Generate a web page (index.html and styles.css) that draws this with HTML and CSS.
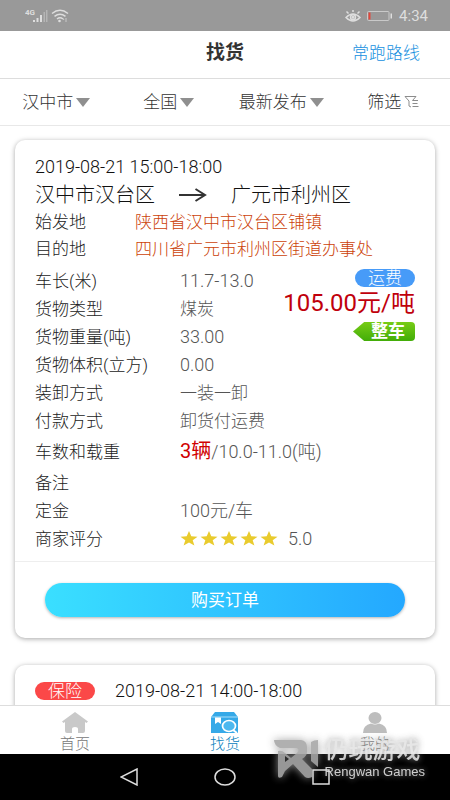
FILE: index.html
```html
<!DOCTYPE html>
<html lang="zh-CN">
<head>
<meta charset="utf-8">
<meta name="viewport" content="width=device-width, initial-scale=1">
<title>找货</title>
<link rel="stylesheet" href="styles.css">
</head>
<body>
<div class="app">
  <div class="status">
    <div class="status-group">
      <svg width="44" height="16" viewBox="0 0 44 16" fill="#dedede">
        <text x="0" y="7" class="net">4G</text>
        <path d="M8 12h2v2H8zM11.500 10h2v4h-2zM15 7h2v7h-2z"/>
        <path d="M18.500 4h1.500V14h-1.500zM21 2h1.500v12H21z" opacity=".4"/>
        <g fill="none" stroke="#dedede" stroke-width="1.500"><path d="M27 5.500q8-6.500 16 0M29.500 8.300q5.500-4.300 11 0M32 11q3-2.300 6 0"/></g>
        <circle cx="34.500" cy="13" r="1.300"/><path d="M38 10l1.500 2H38zM40.500 10h1v4h-1z" opacity=".7"/>
      </svg>
    </div>
    <div class="status-group">
      <svg width="16" height="14" viewBox="0 0 16 14" fill="none" stroke="#dedede" stroke-width="1.500"><path d="M1 8.500q7-7 14 0-7 7-14 0zM8 3V1M3.500 4.500L1.500 2.500M12.500 4.500l2-2"/><circle cx="8" cy="8.300" r="2.500"/><circle cx="8" cy="8.300" r=".8"/></svg>
      <svg width="26" height="10" viewBox="0 0 26 10"><rect x=".5" y=".5" width="21.500" height="9" rx="1" fill="none" stroke="#c9c9c9"/><path fill="#e2463a" d="M1.500 1.500h2v7h-2z"/><path fill="#dedede" d="M23.500 2.500h1.500v5h-1.500z"/></svg>
      <span class="clock">4:34</span>
    </div>
  </div>

  <header class="header">
    <h1 class="title">找货</h1>
    <a class="routes" href="#">常跑路线</a>
  </header>

  <nav class="filters">
    <button class="filter" type="button">汉中市<i class="caret"></i></button>
    <button class="filter" type="button">全国<i class="caret"></i></button>
    <button class="filter" type="button">最新发布<i class="caret"></i></button>
    <button class="filter" type="button">筛选<svg width="16" height="12" viewBox="0 0 16 12" fill="none" stroke="#8c8c8c"><path d="M12 .500H1l4 4.500v5l2 1M12 .500L8.500 4.500M8.500 4.500h5.500M8.500 7.500h5M8.500 10.500h6"/></svg></button>
  </nav>

  <main class="list">
    <article class="card">
      <div class="info">
        <div class="date">2019-08-21 15:00-18:00</div>
        <div class="route">
          <span>汉中市汉台区</span>
          <svg width="28" height="14" viewBox="0 0 28 14" fill="none" stroke="#333" stroke-width="2"><path d="M0 7h26M16.500 1L26 7l-9.500 6"/></svg>
          <span>广元市利州区</span>
        </div>
        <dl class="places">
          <div class="row place"><dt>始发地</dt><dd>陕西省汉中市汉台区铺镇</dd></div>
          <div class="row place"><dt>目的地</dt><dd>四川省广元市利州区街道办事处</dd></div>
        </dl>
        <div class="details">
          <dl class="facts">
            <div class="row"><dt>车长(米)</dt><dd class="num">11.7-13.0</dd></div>
            <div class="row"><dt>货物类型</dt><dd>煤炭</dd></div>
            <div class="row"><dt>货物重量(吨)</dt><dd class="num">33.00</dd></div>
            <div class="row"><dt>货物体积(立方)</dt><dd class="num">0.00</dd></div>
            <div class="row"><dt>装卸方式</dt><dd>一装一卸</dd></div>
            <div class="row"><dt>付款方式</dt><dd>卸货付运费</dd></div>
          </dl>
          <div class="price-box">
            <span class="pill">运费</span>
            <strong class="price">105.00元/吨</strong>
            <span class="tag">整车</span>
          </div>
        </div>
        <dl class="facts">
          <div class="row load"><dt>车数和载重</dt><dd class="num"><span class="trucks">3辆</span>/10.0-11.0(吨)</dd></div>
          <div class="row"><dt>备注</dt><dd></dd></div>
          <div class="row"><dt>定金</dt><dd class="num">100元/车</dd></div>
          <div class="row"><dt>商家评分</dt><dd class="num score">
            <svg width="98" height="16" viewBox="0 0 98 16" fill="#e9cb2d">
              <defs><path id="star" d="M9 0l2.300 5.300 6.200.4-4.800 3.500 1.700 5.300L9 11.500l-5.400 3 1.700-5.300L.500 5.700l6.200-.4z"/></defs>
              <use href="#star"/><use href="#star" x="20"/><use href="#star" x="40"/><use href="#star" x="60"/><use href="#star" x="80"/>
            </svg><span>5.0</span></dd></div>
        </dl>
      </div>
      <div class="action"><button class="buy" type="button">购买订单</button></div>
    </article>

    <article class="card">
      <div class="insured"><span class="pill red">保险</span><span class="date">2019-08-21 14:00-18:00</span></div>
    </article>
  </main>

  <nav class="tabs">
    <a class="tab" href="#"><svg width="26" height="22" viewBox="0 0 26 22" fill="#c9c9c9"><path d="M13 0l13 9.500-1.500 1.500-1.500-1v9q0 2-2 2h-5v-4q0-2-3-2t-3 2v4H5q-2 0-2-2v-9l-1.500 1L0 9.500z"/></svg>首页</a>
    <a class="tab active" href="#"><svg width="28" height="22" viewBox="0 0 28 22"><path fill="#35a9e8" d="M4 0h19l4 5v16H0V5z"/><path stroke="#a8defa" d="M0 5h27"/><path fill="#fff" d="M4 5.500h6V12l-3-2-3 2z"/><ellipse cx="18" cy="14" rx="6.500" ry="5.500" fill="#4db8ef" stroke="#fff" stroke-width="1.700"/><path stroke="#fff" stroke-width="2" d="M22 18l4 3"/></svg>找货</a>
    <a class="tab" href="#"><svg width="26" height="22" viewBox="0 0 26 22" fill="#bdbdbd"><ellipse cx="13" cy="6" rx="6.500" ry="6"/><path d="M1 21q0-8 8-9.500 4 2 8 0 8 1.500 8 9.500z"/></svg>我的</a>
  </nav>

  <div class="system">
    <svg width="18" height="18" viewBox="0 0 18 18"><path d="M17 1v16L1 9z"/></svg>
    <svg width="22" height="18" viewBox="0 0 22 18"><ellipse cx="11" cy="9" rx="10" ry="8"/></svg>
    <svg class="square" width="18" height="16" viewBox="0 0 18 16"><path d="M1 1h16v14H1z"/></svg>
  </div>

  <div class="watermark">
    <svg width="46" height="40" viewBox="0 0 46 40" fill="#a8a8a8"><path d="M1 1h27q6 1 6 7v5q0 4-5 7l10 10v8q-4 2-7 0L20 25l-8 7-3 6q-4 2-4-1V12q4-1 7 2l6 5 6-5q3-3 0-5H7Q1 6 1 1z"/><path d="M38 3q3-2 7-2v27l-7-6z"/><path fill="#333" d="M12 17l4 3-4 3z"/></svg>
    <div class="wm-text"><b>仍玩游戏</b><span>Rengwan Games</span></div>
  </div>
</div>
</body>
</html>
```
FILE: styles.css
```css
* { box-sizing: border-box; }
body {
  margin: 0;
  background: #fff;
  color: #333;
  font: 300 17px/28px Roboto, "Noto Sans CJK SC", sans-serif;
}
button { font: inherit; color: inherit; border: 0; background: none; padding: 0; }
a { color: inherit; text-decoration: none; }
dl, dd, h1 { margin: 0; }
svg { flex: none; }
.app { position: relative; display: flex; flex-direction: column; height: 100vh; overflow: hidden; }

.status {
  display: flex; justify-content: space-between; align-items: center;
  flex: none; height: 31px; padding: 0 22px 0 25px;
  background: #999; color: #dedede;
}
.status-group { display: flex; align-items: center; gap: 6px; }
.net { font: 700 8px Roboto, sans-serif; }
.clock { font-size: 15px; font-weight: 400; }

.header {
  display: grid; grid-template-columns: 1fr auto 1fr; align-items: center;
  flex: none; height: 48px; padding: 0 30px 4px;
  border-bottom: 1px solid #ddd;
}
.title { grid-column: 2; font-size: 19px; font-weight: 700; }
.routes { justify-self: end; color: #1690e0; }

.filters {
  display: grid; grid-template-columns: repeat(4, 1fr); align-items: center;
  flex: none; height: 47px;
  border-bottom: 1px solid #e8e8e8; color: #333;
}
.filter { display: flex; align-items: center; justify-content: center; gap: 3px; }
.caret { border: 7px solid transparent; border-top: 9px solid #8f8f8f; border-bottom: 0; }

.list { flex: 1; min-height: 0; overflow: hidden; padding: 14px 15px 0; }
.card {
  margin-bottom: 27px;
  border-radius: 10px; background: #fff;
  box-shadow: 0 1px 5px rgba(0, 0, 0, .35);
}
.info { padding: 13px 20px 8px; }
.date { font-size: 18px; color: #111; }
.route { display: flex; align-items: center; gap: 24px; font-size: 20px; color: #111; }
.places { margin-bottom: 4px; }
.row { display: flex; }
dt { flex: none; width: 145px; color: #222; }
dd { color: #555; white-space: nowrap; }
.num { font-size: 18px; }
.place { line-height: 27px; }
.place dt { width: 100px; }
.place dd { color: #cc4208; }
.details { display: flex; justify-content: space-between; }
.price-box { display: flex; flex-direction: column; align-items: flex-end; margin-left: -40px; padding-top: 2px; }
.pill {
  width: 60px; border-radius: 9px;
  background: #479bf8; color: #fff;
  line-height: 18px; text-align: center;
}
.price { color: #c0000c; font-size: 24px; font-weight: 400; line-height: 33px; white-space: nowrap; }
.tag {
  width: 62px; margin-top: 2px; padding-left: 8px; border-radius: 4px;
  background: linear-gradient(#77cc16, #42ad08); color: #fff;
  clip-path: polygon(0 50%, 18% 0, 100% 0, 100% 100%, 18% 100%);
  font-weight: 700; line-height: 19px; text-align: center;
}
.load { line-height: 34px; }
.trucks { color: #d00000; font-size: 20px; font-weight: 400; line-height: 20px; }
.score { display: flex; align-items: center; gap: 10px; }

.action { padding: 21px 30px; border-top: 1px solid #eee; }
.buy {
  display: block; width: 100%; height: 34px; border-radius: 17px;
  background: linear-gradient(90deg, #3adfff, #24a8ff); color: #fff;
  box-shadow: 0 1px 3px rgba(0, 0, 0, .3);
  font-weight: 400;
}
.insured { display: flex; align-items: center; gap: 20px; padding: 12px 20px; }
.red { background: #fb4848; }

.tabs {
  display: flex; justify-content: space-around;
  flex: none; height: 49px; border-top: 1px solid #ddd; padding-top: 6px;
  background: #fff; color: #777;
}
.tab { display: flex; flex-direction: column; align-items: center; flex: 1; font-size: 15px; line-height: 20px; }
.active { color: #0880bc; }
.system {
  display: flex; justify-content: center; align-items: center; gap: 76px;
  flex: none; height: 46px; background: #000;
  fill: none; stroke: #ddd; stroke-width: 1.5px;
}
.square { position: relative; z-index: 1; }

.watermark { position: absolute; right: 25px; bottom: 19px; display: flex; align-items: center; gap: 6px; opacity: .9; }
.watermark svg { filter: drop-shadow(0 0 4px #999); }
.wm-text { display: flex; flex-direction: column; color: #e4e4e4; text-shadow: 0 0 6px #999; }
.wm-text b { font-size: 24px; font-weight: 500; line-height: 26px; }
.wm-text span { font: 13px/18px "Liberation Sans", sans-serif; }
```
